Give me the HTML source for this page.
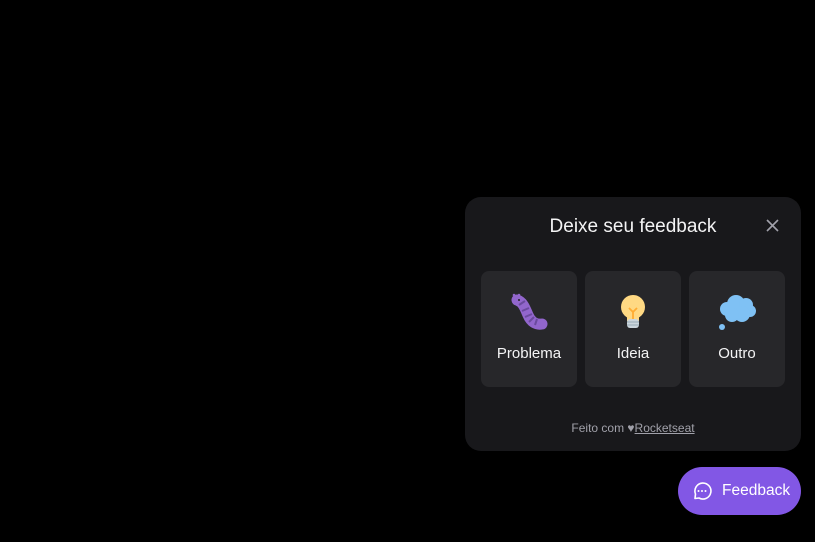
<!DOCTYPE html>
<html><head><style>
*{margin:0;padding:0;box-sizing:border-box}
body{width:815px;height:542px;background:#000;font-family:"Liberation Sans",sans-serif;position:relative;overflow:hidden}
.panel{position:absolute;left:465px;top:197px;width:336px;height:254px;background:#18181b;border-radius:16px}
.title{position:absolute;left:465px;width:336px;top:216px;text-align:center;color:#f4f4f5;font-size:19px}
.card{position:absolute;top:271px;width:96px;height:116px;background:#27272a;border-radius:8px;color:#f4f4f5;font-size:15px;text-align:center}
.card span{position:absolute;left:0;right:0;top:74px}
.card svg{position:absolute;left:29px;top:22px}
.foot{position:absolute;left:465px;width:336px;top:421px;text-align:center;font-size:12px;color:#a1a1aa}
.foot u{color:#a1a1aa;text-decoration:underline}
.btn{position:absolute;left:678px;top:467px;width:123px;height:48px;background:#8257e5;border-radius:24px;color:#fff;font-size:15.5px}
</style></head><body>
<div class="panel"></div>
<div class="title">Deixe seu feedback</div>
<svg style="position:absolute;left:766px;top:219px" width="13" height="13" viewBox="0 0 13 13"><path d="M1 1L12 12M12 1L1 12" stroke="#a1a1aa" stroke-width="1.6"/></svg>
<div class="card" style="left:481px"><svg width="38" height="38" viewBox="0 0 38 38">
<path d="M7 7 C13 9 15 15 18 22 C21 29 26 32 32 31" stroke="#9266cc" stroke-width="11" fill="none" stroke-linecap="round"/>
<path d="M9 12l6-4M12 18l7-3M15 24l7-3M19 29l5-5M25 32l2-6" stroke="#6b4a9e" stroke-width="2"/>
<circle cx="4" cy="2" r="1.3" fill="#9266cc"/><circle cx="9" cy="2" r="1.3" fill="#9266cc"/><circle cx="9" cy="7" r="1" fill="#222"/></svg><span>Problema</span></div>
<div class="card" style="left:585px"><svg width="38" height="38" viewBox="0 0 38 38">
<circle cx="19" cy="14" r="12" fill="#ffd983"/><rect x="13" y="22" width="12" height="6" fill="#ffd983"/>
<path d="M15 15l4 4 4-4M19 19v7" stroke="#ffac33" stroke-width="1.8" fill="none"/>
<rect x="13" y="26" width="12" height="9" rx="3" fill="#ccd6dd"/><path d="M13 29h12M13 32h12" stroke="#99aab5" stroke-width="1"/>
</svg><span>Ideia</span></div>
<div class="card" style="left:689px"><svg width="40" height="38" viewBox="0 0 40 38">
<g fill="#7fc1f4"><circle cx="9" cy="16" r="7"/><circle cx="18" cy="11" r="9"/><circle cx="28" cy="12" r="7"/><circle cx="32" cy="18" r="6"/><circle cx="24" cy="21" r="8"/><circle cx="14" cy="22" r="7"/><circle cx="4" cy="34" r="3"/></g>
</svg><span>Outro</span></div>
<div class="foot">Feito com ♥<u>Rocketseat</u></div>
<div class="btn"><svg style="position:absolute;left:14px;top:14px" width="20" height="20" viewBox="0 0 20 20"><path d="M3 17.5 L3.5 13 A8 8 0 1 1 7 17 Z" stroke="#fff" stroke-width="1.6" fill="none" stroke-linejoin="round"/><circle cx="6.5" cy="10" r="1" fill="#fff"/><circle cx="10" cy="10" r="1" fill="#fff"/><circle cx="13.5" cy="10" r="1" fill="#fff"/></svg><span style="position:absolute;left:44px;top:15px">Feedback</span></div>
</body></html>
